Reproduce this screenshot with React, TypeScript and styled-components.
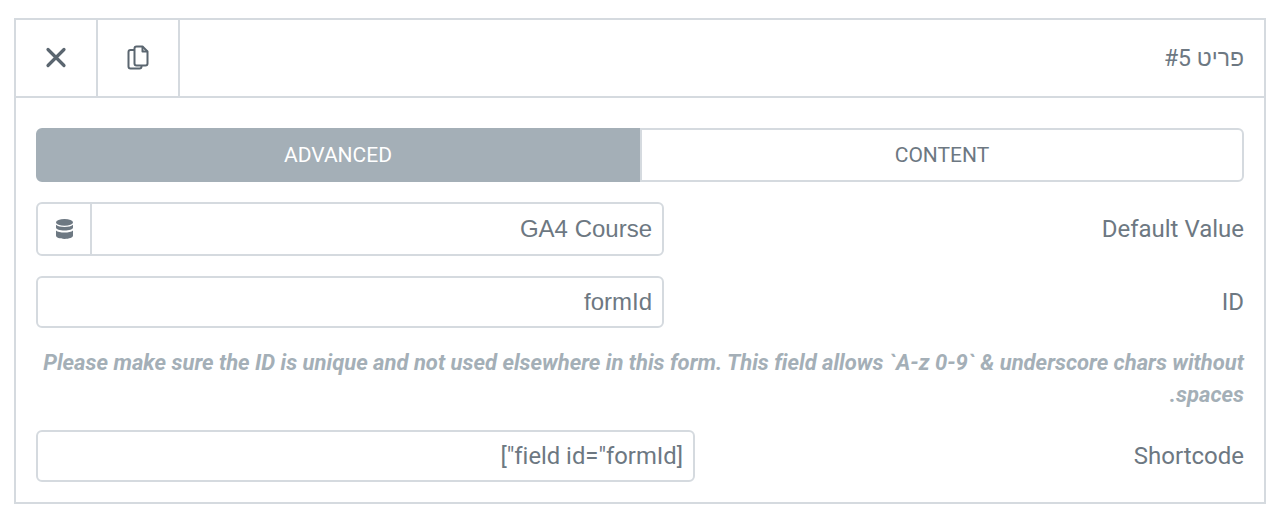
import React from 'react';
import styled, { createGlobalStyle } from 'styled-components';

const GlobalStyle = createGlobalStyle`
  html, body {
    margin: 0;
    padding: 0;
    background: #fff;
  }
  body {
    font-family: Roboto, "Liberation Sans", sans-serif;
    font-variant-ligatures: none;
  }
`;

const Page = styled.div`
  padding: 18px 8px 22px 14px;
`;

const Panel = styled.div`
  direction: rtl;
  box-sizing: border-box;
  width: 1252px;
  height: 486px;
  border: 2px solid #d5dadf;
  color: #6d7882;
`;

const Header = styled.div`
  display: flex;
  align-items: stretch;
  height: 76px;
  border-bottom: 2px solid #d5dadf;
`;

const Title = styled.div`
  flex: 1;
  display: flex;
  align-items: center;
  padding-right: 20px;
  font-size: 23px;
  color: #6d7882;
`;

const HeaderButton = styled.div`
  box-sizing: border-box;
  width: 82px;
  display: flex;
  align-items: center;
  justify-content: center;
  border-right: 2px solid #d5dadf;
  color: #5b6670;
`;

const Body = styled.div`
  display: flex;
  flex-direction: column;
  padding: 30px 20px 0;
`;

const Tabs = styled.div`
  display: flex;
  height: 54px;
`;

const Tab = styled.div<{ $active?: boolean; $side: 'start' | 'end' }>`
  box-sizing: border-box;
  flex: 0 0 604px;
  display: flex;
  align-items: center;
  justify-content: center;
  font-size: 21px;
  direction: ltr;
  background: ${(p) => (p.$active ? '#a4afb7' : '#fff')};
  color: ${(p) => (p.$active ? '#fff' : '#6d7882')};
  border: 2px solid ${(p) => (p.$active ? '#a4afb7' : '#d5dadf')};
  border-radius: ${(p) => (p.$side === 'start' ? '0 6px 6px 0' : '6px 0 0 6px')};
`;

const Row = styled.div<{ $top: number }>`
  display: flex;
  align-items: center;
  justify-content: space-between;
  margin-top: ${(p) => p.$top}px;
`;

const Label = styled.div`
  font-size: 24px;
  color: #6d7882;
`;

const Field = styled.div<{ $width: number; $height: number }>`
  box-sizing: border-box;
  display: flex;
  align-items: stretch;
  width: ${(p) => p.$width}px;
  height: ${(p) => p.$height}px;
  border: 2px solid #d5dadf;
  border-radius: 6px;
`;

const FieldValue = styled.div<{ $arial?: boolean }>`
  flex: 1;
  display: flex;
  align-items: center;
  padding-right: 10px;
  font-size: ${(p) => (p.$arial ? '24px' : '23.8px')};
  font-family: ${(p) => (p.$arial ? '"Liberation Sans", sans-serif' : 'Roboto, sans-serif')};
  color: #6d7882;
`;

const DynamicTag = styled.div`
  width: 52px;
  display: flex;
  align-items: center;
  justify-content: center;
  border-right: 2px solid #d5dadf;
  color: #6d7882;
`;

const Help = styled.div`
  margin-top: 18.6px;
  margin-bottom: -0.6px;
  font-size: 22px;
  line-height: 32px;
  font-style: italic;
  font-weight: 700;
  color: #a4afb7;
`;

const CloseIcon = () => (
  <svg width="24" height="24" viewBox="0 0 24 24" fill="none" stroke="currentColor" strokeWidth="3.2" strokeLinecap="round">
    <path d="M4 3.5l16 16M20 3.5l-16 16" />
  </svg>
);

const CopyIcon = () => (
  <svg width="24" height="26" viewBox="0 0 24 26" fill="none" stroke="currentColor" strokeWidth="2" strokeLinejoin="round">
    <path d="M8.5 4V3.5a2 2 0 0 1 2-2h6l5 5v12a2 2 0 0 1-2 2h-9a2 2 0 0 1-2-2z" />
    <path d="M16.5 1.5v5h5" />
    <path d="M8.5 5H4.5a2 2 0 0 0-2 2v14.5a2 2 0 0 0 2 2h9a2 2 0 0 0 2-2v-1" />
  </svg>
);

const DatabaseIcon = () => (
  <svg width="17" height="20" viewBox="0 0 17 20" fill="currentColor">
    <ellipse cx="8.5" cy="3.4" rx="8.5" ry="3.4" />
    <path d="M0 5.8C1.6 7.3 4.8 8 8.5 8s6.9-.7 8.5-2.2V8.6c0 1.8-3.8 3-8.5 3S0 10.4 0 8.6z" />
    <path d="M0 11.4c1.6 1.4 4.8 2.1 8.5 2.1s6.9-.7 8.5-2.1V16.6c0 2-3.8 3.4-8.5 3.4S0 18.6 0 16.6z" />
  </svg>
);

const App: React.FC = () => {
  return (
    <Page>
      <GlobalStyle />
      <Panel>
        <Header>
          <Title>פריט #5</Title>
          <HeaderButton>
            <CopyIcon />
          </HeaderButton>
          <HeaderButton>
            <CloseIcon />
          </HeaderButton>
        </Header>
        <Body>
          <Tabs>
            <Tab $side="start">CONTENT</Tab>
            <Tab $side="end" $active>ADVANCED</Tab>
          </Tabs>
          <Row $top={20}>
            <Label>Default Value</Label>
            <Field $width={628} $height={54}>
              <FieldValue $arial>GA4 Course</FieldValue>
              <DynamicTag>
                <DatabaseIcon />
              </DynamicTag>
            </Field>
          </Row>
          <Row $top={20}>
            <Label>ID</Label>
            <Field $width={628} $height={52}>
              <FieldValue $arial>formId</FieldValue>
            </Field>
          </Row>
          <Help>
            Please make sure the ID is unique and not used elsewhere in this form. This field allows `A-z 0-9` &amp; underscore chars without spaces.
          </Help>
          <Row $top={20}>
            <Label>Shortcode</Label>
            <Field $width={659} $height={52}>
              <FieldValue>[field id="formId"]</FieldValue>
            </Field>
          </Row>
        </Body>
      </Panel>
    </Page>
  );
};

export default App;
